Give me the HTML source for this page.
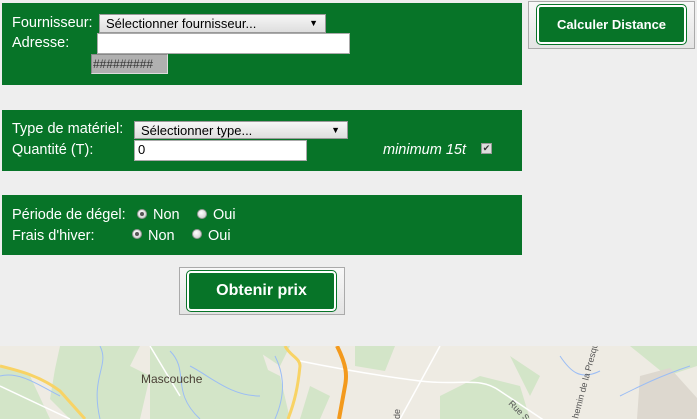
<!DOCTYPE html>
<html><head><meta charset="utf-8"><style>
body{margin:0;width:697px;height:419px;background:#eeeeee;position:relative;overflow:hidden;font-family:"Liberation Sans",sans-serif}
.p{position:absolute;left:2px;width:520px;background:#077428}
.a{position:absolute}
.t{position:absolute;color:#fff;font-size:14.5px;line-height:16px}
.sel{position:absolute;background:linear-gradient(#f6f6f6,#dedede);border:1px solid #999;font-size:13px;color:#000;box-sizing:border-box;padding:1px 6px;line-height:15px}
.sel:after{content:"▼";position:absolute;right:7px;top:1px;font-size:9px}
.inp{position:absolute;background:#fff;border:1px solid #aaa;box-sizing:border-box;font-size:13px;padding:2px 3px;line-height:14px}
.r{position:absolute;width:10px;height:10px;border-radius:50%;background:radial-gradient(circle at 40% 35%,#fff,#c8c8c8);border:1px solid #999;box-sizing:border-box}
.r.on:after{content:"";position:absolute;left:2px;top:2px;width:4px;height:4px;border-radius:50%;background:#555}
.bo{position:absolute;background:linear-gradient(#f8f8f8,#e4e4e4);border:1px solid #aaa;box-sizing:border-box}
.bi{position:absolute;background:#077428;border:2px solid #fff;outline:1px solid #077428;border-radius:4px;box-sizing:border-box;color:#fff;font-weight:bold;text-align:center}
</style></head><body>
<div class="p" style="top:3px;height:82px"></div>
<div class="t" style="left:12px;top:15px">Fournisseur:</div>
<div class="sel" style="left:99px;top:14px;width:227px;height:19px">Sélectionner fournisseur...</div>
<div class="t" style="left:12px;top:35px">Adresse:</div>
<div class="inp" style="left:97px;top:33px;width:253px;height:21px"></div>
<div class="a" style="left:91px;top:54px;width:77px;height:20px;background:#b0b0b0;border:1px solid #ddd;border-top-color:#888;border-left-color:#888;box-sizing:border-box;font-size:12px;color:#333;padding:2px 0 0 1px;line-height:14px">#########</div>
<div class="bo" style="left:528px;top:1px;width:167px;height:48px"></div>
<div class="bi" style="left:537px;top:5px;width:149px;height:39px;font-size:13px;line-height:35px">Calculer Distance</div>

<div class="p" style="top:110px;height:61px"></div>
<div class="t" style="left:12px;top:121px">Type de matériel:</div>
<div class="sel" style="left:134px;top:121px;width:214px;height:18px">Sélectionner type...</div>
<div class="t" style="left:12px;top:142px">Quantité (T):</div>
<div class="inp" style="left:134px;top:140px;width:173px;height:21px">0</div>
<div class="t" style="left:383px;top:142px;font-style:italic">minimum 15t</div>
<div class="a" style="left:481px;top:143px;width:11px;height:11px;background:#ddd;border:1px solid #999;box-sizing:border-box;font-size:9px;line-height:9px;color:#333;text-align:center">✔</div>

<div class="p" style="top:195px;height:60px"></div>
<div class="t" style="left:12px;top:207px">Période de dégel:</div>
<div class="r on" style="left:137px;top:209px"></div>
<div class="t" style="left:153px;top:207px">Non</div>
<div class="r" style="left:197px;top:209px"></div>
<div class="t" style="left:213px;top:207px">Oui</div>
<div class="t" style="left:12px;top:228px">Frais d'hiver:</div>
<div class="r on" style="left:132px;top:229px"></div>
<div class="t" style="left:148px;top:228px">Non</div>
<div class="r" style="left:192px;top:229px"></div>
<div class="t" style="left:208px;top:228px">Oui</div>

<div class="bo" style="left:179px;top:267px;width:166px;height:48px"></div>
<div class="bi" style="left:187px;top:271px;width:149px;height:40px;font-size:16px;line-height:36px">Obtenir prix</div>

<svg class="a" style="left:0;top:346px" width="697" height="73" viewBox="0 0 697 73">
<rect width="697" height="73" fill="#eeebe3"/>
<g fill="#d3e5c8">
<path d="M60 0h80l-10 20 20 10-10 43H70l-20-20 5-30z"/>
<path d="M150 0h110l10 30-30 43H150z"/>
<path d="M200 20l40-10 40 20 10 43h-70z"/>
<path d="M250 0h40l-10 20z"/>
<path d="M355 0h40l-10 25-30-5z"/>
<path d="M440 50l40-20 40 10 10 33h-90z"/>
<path d="M510 10l30 20-10 20z"/>
<path d="M630 0h67v20l-30 10z"/>
<path d="M0 20l30 10 20 43H0z"/>
<path d="M310 40l20 10-10 23h-20z"/>
</g>
<path d="M640 30l30-8 27 30v21h-60z" fill="#ddd8cf"/>
<g fill="none" stroke="#9bbdf5" stroke-width="1">
<path d="M100 0c10 20-10 30 0 73"/><path d="M170 5c20 20 0 40 30 68"/><path d="M190 20c20 10 40 30 70 30"/>
<path d="M275 10c10 20 10 40 0 63"/><path d="M560 10c10 15 20 25 40 15"/><path d="M620 50c20-10 40-20 70-30"/>
<path d="M0 30c20-5 40 10 60 20"/>
</g>
<g fill="none" stroke="#fff" stroke-width="1.5">
<path d="M300 15c40 8 80 15 120 20 40 5 60-5 80 10l45 30"/>
<path d="M150 0l30 50"/><path d="M0 40l70 33"/><path d="M440 0l-40 73"/>
</g>
<path d="M0 20c20 5 40 10 60 25l25 28" fill="none" stroke="#f8d365" stroke-width="3"/>
<path d="M285 0c5 10 15 12 15 20-2 20-5 35-12 53" fill="none" stroke="#f8d365" stroke-width="3"/>
<path d="M337 0c10 20 10 30 8 40l-6 33" fill="none" stroke="#f39a1d" stroke-width="4"/>
<text x="141" y="37" font-family="Liberation Sans,sans-serif" font-size="12" fill="#4a4036">Mascouche</text>
<text x="508" y="58" font-family="Liberation Sans,sans-serif" font-size="9" fill="#555" transform="rotate(45 508 58)">Rue Sain</text>
<text x="578" y="73" font-family="Liberation Sans,sans-serif" font-size="9" fill="#555" transform="rotate(-75 578 73)">hemin de la Presqu</text>
<text x="400" y="73" font-family="Liberation Sans,sans-serif" font-size="9" fill="#555" transform="rotate(-90 400 73)">de</text>
</svg>
</body></html>
